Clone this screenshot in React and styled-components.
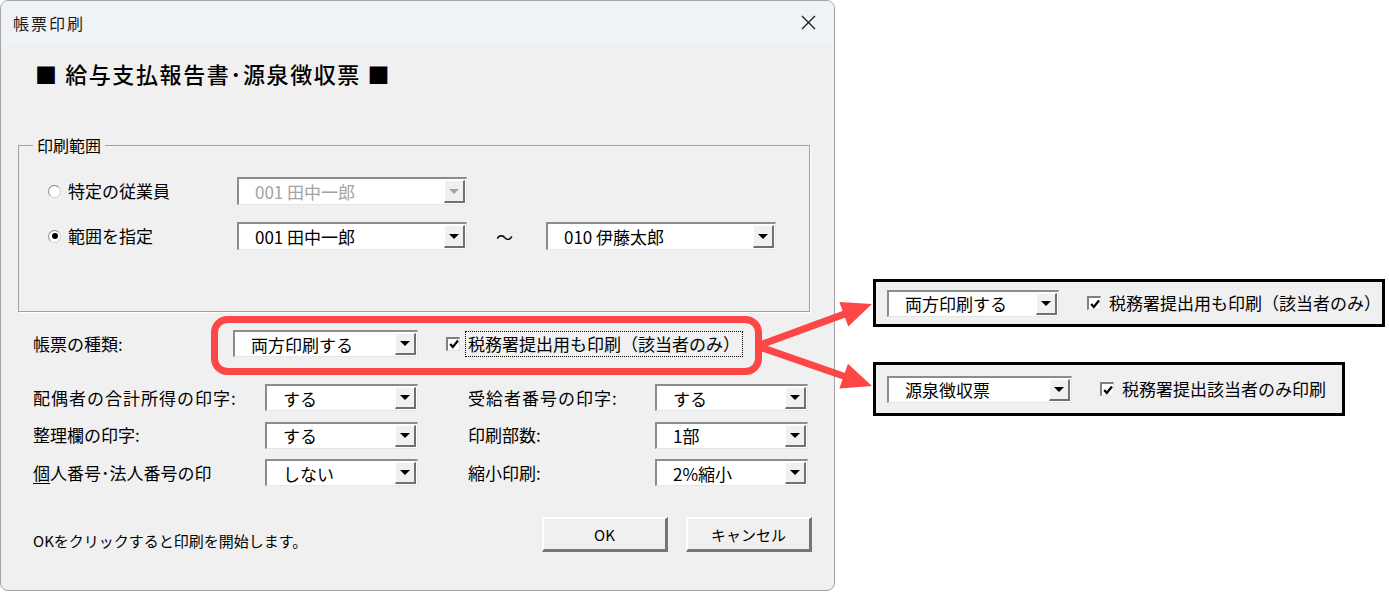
import styled, { createGlobalStyle } from 'styled-components';

const GlobalStyle = createGlobalStyle`
  html, body {
    margin: 0;
    padding: 0;
    background: #ffffff;
  }
  body {
    font-family: "Noto Sans CJK JP", "Noto Sans", sans-serif;
    color: #000;
  }
  * {
    box-sizing: border-box;
  }
`;

const Page = styled.div`
  position: relative;
  display: flex;
  align-items: flex-start;
  width: 1389px;
  height: 592px;
  overflow: hidden;
`;

const Window = styled.div`
  flex-shrink: 0;
  display: flex;
  flex-direction: column;
  width: 835px;
  height: 591px;
  border: 1px solid #a3a3a3;
  border-radius: 8px;
  overflow: hidden;
  background: #f0f0f0;
`;

const TitleBar = styled.div`
  display: flex;
  align-items: center;
  justify-content: space-between;
  height: 43px;
  padding: 0 18px 0 12px;
  background: #eff3f8;
`;

const Title = styled.span`
  font-size: 16px;
  letter-spacing: 2px;
  color: #1b1b1b;
`;

const Heading = styled.h1`
  margin: 14px 0 0 34px;
  font-size: 22px;
  line-height: 30px;
  font-weight: 500;
  letter-spacing: 1.6px;
  color: #000;
`;

const GroupBox = styled.fieldset`
  width: 792px;
  margin: 46px 0 0 17px;
  padding: 0;
  border: 1px solid #a0a0a0;
  box-shadow: 1px 1px 0 #fff;
`;

const Legend = styled.legend`
  margin-left: 14px;
  padding: 0 4px;
  font-size: 16px;
  line-height: 22px;
`;

const RangeGrid = styled.div`
  display: grid;
  grid-template-columns: 189px 230px 79px 230px;
  grid-auto-rows: 28px;
  row-gap: 17px;
  align-items: center;
  padding: 21px 0 61px 29px;
`;

const RadioLabel = styled.label`
  display: flex;
  align-items: center;
  gap: 7px;
  font-size: 17px;
  line-height: 22px;
`;

const RadioCircle = styled.span`
  display: flex;
  align-items: center;
  justify-content: center;
  width: 13px;
  height: 13px;
  border-radius: 50%;
  background: #fff;
  border: 1px solid;
  border-color: #8a8a8a #d0d0d0 #d0d0d0 #8a8a8a;

  &::after {
    content: '';
    display: ${(p) => (p.$checked ? 'block' : 'none')};
    width: 6px;
    height: 6px;
    border-radius: 50%;
    background: #000;
  }
`;

const Tilde = styled.span`
  justify-self: center;
  font-size: 17px;
  padding-right: 4px;
`;

const ComboFrame = styled.div`
  display: flex;
  align-items: stretch;
  width: ${(p) => p.$w}px;
  height: ${(p) => p.$h}px;
  background: #fff;
  border-style: solid;
  border-width: 2px 1px 1px 2px;
  border-color: #8c8c8c #e6e6e6 #e6e6e6 #8c8c8c;
`;

const ComboText = styled.span`
  flex: 1;
  display: flex;
  align-items: center;
  padding-left: 16px;
  font-size: 17px;
  white-space: nowrap;
  color: ${(p) => (p.$disabled ? '#a3a3a3' : '#000')};
`;

const ComboButton = styled.span`
  display: flex;
  align-items: center;
  justify-content: center;
  width: 21px;
  margin: 1px 1px 1px 0;
  background: #f0f0f0;
  border-style: solid;
  border-width: 1px 2px 2px 1px;
  border-color: #ffffff #707070 #707070 #ffffff;

  &::after {
    content: '';
    width: 0;
    height: 0;
    border-left: 5px solid transparent;
    border-right: 5px solid transparent;
    border-top: 5px solid ${(p) => (p.$disabled ? '#a3a3a3' : '#000')};
  }
`;

const Combo = ({ value, width, height = 27, disabled }) => (
  <ComboFrame $w={width} $h={height}>
    <ComboText $disabled={disabled}>{value}</ComboText>
    <ComboButton $disabled={disabled} />
  </ComboFrame>
);

const KindRow = styled.div`
  display: flex;
  align-items: center;
  margin: 18px 0 0 32px;
`;

const FieldLabel = styled.span`
  width: ${(p) => p.$w || 'auto'};
  font-size: 17px;
  line-height: 24px;
  white-space: nowrap;
  letter-spacing: ${(p) => p.$ls || 0}px;
`;

const CheckRow = styled.label`
  display: flex;
  align-items: center;
  gap: 7px;
  margin-left: ${(p) => p.$ml}px;
`;

const CheckBox = styled.span`
  display: flex;
  align-items: center;
  justify-content: center;
  width: 14px;
  height: 14px;
  background: #fff;
  border-style: solid;
  border-width: 2px 1px 1px 2px;
  border-color: #808080 #e3e3e3 #e3e3e3 #808080;
`;

const CheckText = styled.span`
  font-size: 17px;
  line-height: 22px;
  padding: 0 1px;
  white-space: nowrap;
  outline: ${(p) => (p.$focused ? '1px dotted #000' : 'none')};
  outline-offset: 1px;
`;

const Check = ({ label, focused, ml = 28 }) => (
  <CheckRow $ml={ml}>
    <CheckBox>
      <svg width="10" height="10" viewBox="0 0 10 10">
        <path d="M1.2 5 L3.8 8 L9 1.5" fill="none" stroke="#000" strokeWidth="2.2" />
      </svg>
    </CheckBox>
    <CheckText $focused={focused}>{label}</CheckText>
  </CheckRow>
);

const OptionGrid = styled.div`
  display: grid;
  grid-template-columns: 232px 153px 50px 187px 153px;
  grid-auto-rows: 27px;
  row-gap: 10.5px;
  align-items: center;
  margin: 27px 0 0 32px;
`;

const Accel = styled.span`
  text-decoration: underline;
  text-underline-offset: 3px;
`;

const Footer = styled.div`
  display: flex;
  align-items: flex-end;
  gap: 18px;
  margin-top: 31px;
  padding: 0 22px 0 32px;
`;

const Hint = styled.span`
  flex: 1;
  font-size: 15px;
  line-height: 22px;
`;

const DialogButton = styled.button`
  width: 126px;
  height: 35px;
  padding: 0;
  font-family: inherit;
  font-size: 15px;
  color: #000;
  background: #f0f0f0;
  border-style: solid;
  border-width: 2px 3px 3px 2px;
  border-color: #ffffff #767676 #767676 #ffffff;
`;

const Callouts = styled.div`
  display: flex;
  flex-direction: column;
  align-items: flex-start;
  gap: 35px;
  margin: 279px 0 0 38px;
`;

const CalloutBox = styled.div`
  display: flex;
  align-items: center;
  width: ${(p) => p.$w}px;
  height: ${(p) => p.$h}px;
  padding-left: 11px;
  background: #f0f0f0;
  border: 3px solid #000;
`;

const Overlay = styled.svg`
  position: absolute;
  top: 0;
  left: 0;
  pointer-events: none;
`;

const RED = '#fd4646';

// arrow from start to tip: a thick shaft plus a triangular head
const arrowParts = ([sx, sy], [tx, ty], headLen = 30, headHalf = 13) => {
  const dx = tx - sx;
  const dy = ty - sy;
  const len = Math.hypot(dx, dy);
  const ux = dx / len;
  const uy = dy / len;
  const bx = tx - ux * headLen;
  const by = ty - uy * headLen;
  const nx = -uy;
  const ny = ux;
  const head = [
    [tx, ty],
    [bx + nx * headHalf, by + ny * headHalf],
    [bx - nx * headHalf, by - ny * headHalf],
  ]
    .map((p) => p.join(','))
    .join(' ');
  return { line: { x1: sx, y1: sy, x2: bx + ux * 2, y2: by + uy * 2 }, head };
};

const arrows = [arrowParts([757, 346], [872, 304]), arrowParts([757, 346], [872, 386])];

const options = [
  ['配偶者の合計所得の印字:', 'する', '受給者番号の印字:', 'する'],
  ['整理欄の印字:', 'する', '印刷部数:', '1部'],
  [null, 'しない', '縮小印刷:', '2%縮小'],
];

export default function App() {
  return (
    <Page>
      <GlobalStyle />
      <Window>
        <TitleBar>
          <Title>帳票印刷</Title>
          <svg width="15" height="15" viewBox="0 0 15 15">
            <path d="M1 1 L14 14 M14 1 L1 14" stroke="#1b1b1b" strokeWidth="1.3" />
          </svg>
        </TitleBar>

        <Heading>■ 給与支払報告書･源泉徴収票 ■</Heading>

        <GroupBox>
          <Legend>印刷範囲</Legend>
          <RangeGrid>
            <RadioLabel>
              <RadioCircle />
              特定の従業員
            </RadioLabel>
            <Combo value="001 田中一郎" width={230} height={28} disabled />
            <span />
            <span />
            <RadioLabel>
              <RadioCircle $checked />
              範囲を指定
            </RadioLabel>
            <Combo value="001 田中一郎" width={230} height={28} />
            <Tilde>～</Tilde>
            <Combo value="010 伊藤太郎" width={230} height={28} />
          </RangeGrid>
        </GroupBox>

        <KindRow>
          <FieldLabel $w="200px">帳票の種類:</FieldLabel>
          <Combo value="両方印刷する" width={185} />
          <Check label="税務署提出用も印刷（該当者のみ）" focused />
        </KindRow>

        <OptionGrid>
          {options.map(([l1, v1, l2, v2], i) => [
            <FieldLabel key={`l${i}`} $ls={i === 0 ? 1 : 0}>
              {l1 ?? (
                <>
                  <Accel>個</Accel>人番号･法人番号の印
                </>
              )}
            </FieldLabel>,
            <Combo key={`c${i}`} value={v1} width={153} />,
            <span key={`s${i}`} />,
            <FieldLabel key={`r${i}`} $ls={i === 0 ? 1 : 0}>
              {l2}
            </FieldLabel>,
            <Combo key={`d${i}`} value={v2} width={153} />,
          ])}
        </OptionGrid>

        <Footer>
          <Hint>OKをクリックすると印刷を開始します。</Hint>
          <DialogButton>OK</DialogButton>
          <DialogButton>キャンセル</DialogButton>
        </Footer>
      </Window>

      <Callouts>
        <CalloutBox $w={512} $h={48}>
          <Combo value="両方印刷する" width={185} />
          <Check label="税務署提出用も印刷（該当者のみ）" />
        </CalloutBox>
        <CalloutBox $w={472} $h={54}>
          <Combo value="源泉徴収票" width={185} />
          <Check label="税務署提出該当者のみ印刷" />
        </CalloutBox>
      </Callouts>

      <Overlay width="1389" height="592" viewBox="0 0 1389 592">
        <rect
          x="214.5"
          y="319.5"
          width="544"
          height="52"
          rx="13"
          fill="none"
          stroke={RED}
          strokeWidth="7"
        />
        {arrows.map((a, i) => (
          <g key={i}>
            <line {...a.line} stroke={RED} strokeWidth="7" />
            <polygon points={a.head} fill={RED} />
          </g>
        ))}
      </Overlay>
    </Page>
  );
}
